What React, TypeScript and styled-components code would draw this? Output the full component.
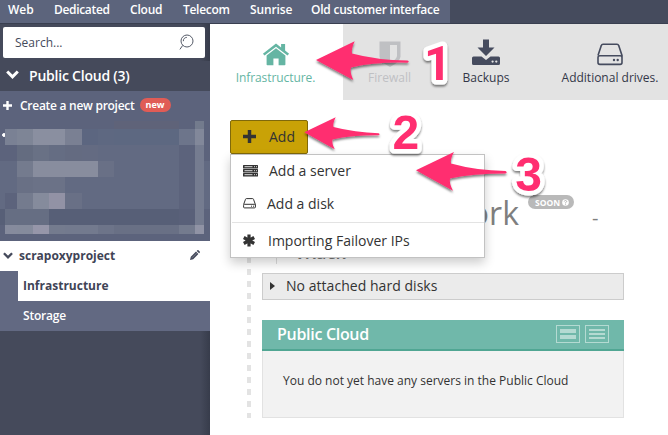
import React from "react";
import styled, { createGlobalStyle } from "styled-components";

const Global = createGlobalStyle`
  * { box-sizing: border-box; }
  body { margin: 0; background: #fff; overflow: hidden; }
  #root { font-family: "Open Sans", "Noto Sans", sans-serif; color: #333; }
  svg { display: block; flex: none; }
`;

const Page = styled.div`
  position: relative;
  width: 668px;
  height: 435px;
  overflow: hidden;
  display: flex;
  flex-direction: column;
  white-space: nowrap;
`;

const TopBar = styled.header`
  height: 24px;
  flex: none;
  background: #454b5d;
  border-bottom: 1px solid #393f50;
`;
const Nav = styled.nav`
  width: 450px;
  height: 23px;
  padding-left: 8px;
  display: flex;
  background: #5c647c;
`;
const NavItem = styled.a<{ $w: number; $ls?: number }>`
  width: ${(p) => p.$w}px;
  flex: none;
  font-size: 12px;
  font-weight: 600;
  line-height: 19px;
  letter-spacing: ${(p) => p.$ls ?? 0}px;
  color: #fff;
`;

const Body = styled.div`
  flex: 1;
  display: flex;
  min-height: 0;
`;
const Sidebar = styled.aside`
  width: 210px;
  flex: none;
  display: flex;
  flex-direction: column;
  color: #fff;
  background: linear-gradient(90deg, #454a5b 0 200px, #373c4b 210px);
`;
const Search = styled.div`
  margin: 3px 5px 3px 3px;
  height: 31px;
  flex: none;
  padding: 0 11px 0 12px;
  display: flex;
  align-items: center;
  justify-content: space-between;
  border-radius: 2px;
  background: #fff;
  color: #454a5b;
  font-size: 12px;
`;
const SideRow = styled.div<{ $bg: string; $color?: string; $pad: number; $size?: number; $weight?: number }>`
  height: 30px;
  flex: none;
  display: flex;
  align-items: center;
  padding: 0 10px 2px ${(p) => p.$pad}px;
  background: ${(p) => p.$bg};
  color: ${(p) => p.$color ?? "#fff"};
  font-size: ${(p) => p.$size ?? 12}px;
  font-weight: ${(p) => p.$weight ?? 600};
`;
const SideLabel = styled.span<{ $gap: number; $ls?: number }>`
  margin-left: ${(p) => p.$gap}px;
  letter-spacing: ${(p) => p.$ls ?? 0}px;
`;
const NewPill = styled.span`
  margin-left: 5px;
  width: 31px;
  height: 14px;
  border-radius: 7px;
  background: #e05c56;
  font-size: 9px;
  font-weight: 700;
  line-height: 13px;
  text-align: center;
`;
const EditIcon = styled.span`
  margin-left: auto;
`;
const SubItem = styled(SideRow)`
  border-left: 18px solid #626982;
`;

const Mosaic = styled.div`
  height: 120px;
  flex: none;
  display: grid;
  grid-template-columns: 5px 12px 16px 16px 16px 17px 16px 16px 65px 16px 9px 6px;
  grid-template-rows: 8px 16px 16px 16px 16px 16px 16px 9px 7px;
`;
const Cell = styled.i<{ $c: string }>`
  background: ${(p) => p.$c};
`;

const Main = styled.main`
  flex: 1;
  min-width: 0;
  display: flex;
  flex-direction: column;
  background: #fff;
`;
const Tabs = styled.div`
  height: 76px;
  flex: none;
  display: flex;
  background: #e3e3e3;
`;
const Tab = styled.div<{ $w: number; $bg?: string; $color: string; $ls?: number }>`
  width: ${(p) => p.$w}px;
  flex: none;
  display: flex;
  flex-direction: column;
  align-items: center;
  background: ${(p) => p.$bg ?? "transparent"};
  color: ${(p) => p.$color};
  font-size: 12px;
  line-height: 14px;
  letter-spacing: ${(p) => p.$ls ?? 0}px;
  svg { margin: 15px 0 2px; }
`;

const TabLabel = styled.span`
  padding-top: 1px;
`;

const Content = styled.section`
  position: relative;
  flex: 1;
  padding: 20px 0 0 20px;
`;
const AddButton = styled.button`
  width: 78px;
  height: 34px;
  padding: 0 0 1px 12px;
  display: flex;
  align-items: center;
  border: 1px solid #80690a;
  border-radius: 2px;
  background: #c9a206;
  color: #333;
  font: 14px "Open Sans", sans-serif;
`;
const AddLabel = styled.span`
  margin-left: 13px;
`;
const Menu = styled.div`
  position: absolute;
  left: 20px;
  top: 54px;
  width: 255px;
  height: 104px;
  background: #fff;
  border: 1px solid #c2c2c2;
  box-shadow: 0 5px 10px rgba(0, 0, 0, 0.2);
`;
const MenuItem = styled.div<{ $h: number; $gap: number; $ls?: number }>`
  height: ${(p) => p.$h}px;
  padding: 0 0 2px 12px;
  display: flex;
  align-items: center;
  font-size: 14px;
  color: #333;
  span { margin-left: ${(p) => p.$gap}px; letter-spacing: ${(p) => p.$ls ?? 0}px; }
`;
const Divider = styled.div`
  height: 1px;
  margin: 2px 0 2px 1px;
  background: #e3e3e3;
`;

const Diagram = styled.div`
  display: flex;
`;
const DashedLine = styled.div`
  width: 4px;
  height: 264px;
  margin-left: 17px;
  background: repeating-linear-gradient(#e3e3e3 0 6px, transparent 6px 12px);
  background-position-y: 7px;
`;
const Stack = styled.div`
  width: 362px;
  margin-left: 11px;
  display: flex;
  flex-direction: column;
`;
const TitleRow = styled.div`
  height: 88px;
  padding-top: 34px;
  display: flex;
  align-items: flex-start;
  color: #7f7f7f;
`;
const Title = styled.h1`
  width: 257px;
  margin: 2px 1px 0 0;
  font-size: 32px;
  font-weight: 400;
  line-height: 46px;
  text-align: right;
`;
const Soon = styled.span`
  margin: 7px 0 0 8px;
  width: 46px;
  height: 14px;
  padding-left: 7px;
  border-radius: 7px;
  display: flex;
  align-items: center;
  gap: 2px;
  background: #b9b9b9;
  color: #fff;
  font-size: 8.5px;
  font-weight: 700;
`;
const Dash = styled.span`
  margin: 18px 0 0 18px;
  font-size: 20px;
  line-height: 24px;
`;
const Rack = styled.div`
  height: 22px;
  margin: 0 0 9px 14px;
  padding-left: 18px;
  border-left: 1px solid #ddd;
  font-size: 18px;
  font-weight: 600;
  line-height: 20px;
  color: #777;
`;
const Disks = styled.div`
  height: 27px;
  padding: 0 0 2px 7px;
  display: flex;
  align-items: center;
  border: 1px solid #ccc;
  background: #ebebeb;
  font-size: 14px;
  span { margin-left: 11px; letter-spacing: 0.04px; }
`;
const Card = styled.div`
  margin-top: 20px;
  height: 98px;
  border: 1px solid #e2e2e2;
  border-top: 0;
  background: #f2f2f2;
`;
const CardHead = styled.div`
  height: 31px;
  margin: 0 -1px;
  padding: 0 15px 1px;
  display: flex;
  align-items: center;
  gap: 5px;
  background: #70b8aa;
  border-bottom: 2px solid #50a693;
  color: #fff;
  font-size: 16px;
  font-weight: 600;
`;
const CardTitle = styled.span`
  flex: 1;
  letter-spacing: -0.3px;
`;
const CardText = styled.p`
  margin: 20px 0 0 20px;
  font-size: 12px;
  line-height: 20px;
`;
const Annotations = styled.svg`
  position: absolute;
  inset: 0;
  font-weight: 700;
  font-size: 48px;
`;

const B = "#5c637c";
const M = "#626a82";
const D = "#575f77";
const tick = `radial-gradient(circle at 4px 6px, #fff 1.5px, ${B} 2.2px)`;
const mosaicRows: string[][] = [
  [B, B, B, B, B, B, B, B, "#5f6379", B, "#737b8d", B],
  [tick, "#7a8194", "#7e8596", "#8a8fa0", "#8a8fa0", "#7a8093", "#5c6680", "#5e6881", "#5d6881", "#6d758b", "#82889a", B],
  [B, B, "#646c80", "#697185", "#656d83", "#646b81", "#646b82", M, M, B, "#757c90", B],
  [M, M, "#747b8e", "#888d9e", "#888d9e", "#888d9e", "#888d9e", "#697086", M, B, "#757c90", M],
  [M, M, "#697085", "#6b7287", "#6b7287", M, M, M, M, B, "#757c90", M],
  [M, B, "#747b8e", "#858b9c", "#9292a5", "#697086", M, M, M, B, "#757c90", M],
  [D, "#666e83", "#666e83", "#666e83", D, D, D, D, D, "#596079", "#757c90", B],
  [B, "#868b9d", "#858b9c", "#9696a9", "#747b8e", "#737a8e", "#737a8e", "#6d7489", "#697085", "#747b8e", "#9093a5", B],
  [B, B, B, B, B, B, B, B, B, B, B, B],
];
const mosaicCells = mosaicRows.flat();

const Chevron = ({ w, color }: { w: number; color: string }) => (
  <svg width={w} height={w * 0.7} viewBox="0 0 13 9">
    <path d="M1.2 1.5 6.5 6.8 11.8 1.5" fill="none" stroke={color} strokeWidth="3" />
  </svg>
);
const Plus = ({ s, color }: { s: number; color: string }) => (
  <svg width={s} height={s} viewBox="0 0 12 12">
    <path d="M4.4 0h3.2v4.4H12v3.2H7.6V12H4.4V7.6H0V4.4h4.4z" fill={color} />
  </svg>
);
const Magnifier = () => (
  <svg width="16" height="17" viewBox="0 0 16 17" fill="none" stroke="#555b68">
    <circle cx="9" cy="7" r="6" strokeWidth="1" />
    <path d="M5.3 7.2c0-2.4 1.4-3.700 3.500-3.800M4.700 11.400 1.900 15.400" strokeWidth="1" />
  </svg>
);
const Pencil = () => (
  <svg width="10" height="10" viewBox="0 0 10 10" fill="#454a5b">
    <path d="M0 10 .8 6.8 6 1.6 8.4 4 3.2 9.2zM6.7.9 7.3.3q.6-.5 1.2 0l1.2 1.2q.5.6 0 1.2l-.6.6z" />
    <path d="M2 7.8 6.8 3" stroke="#aeb1bb" strokeWidth=".5" />
  </svg>
);
const House = () => (
  <svg width="28" height="29" viewBox="0 0 28 29" fill="#65b5a3">
    <path d="M14 4.5.9 14.8l1.6 1.8L14 7.8l11.5 8.8 1.6-1.8-4-3.2V5h-4v3.4z" />
    <path d="M14 9.3 4.6 16.5V25.4q0 .8.8.8h6v-6.7h5.2v6.7h6q.8 0 .8-.8v-8.9z" />
  </svg>
);
const Shield = () => (
  <svg width="28" height="29" viewBox="0 0 28 29">
    <path d="M3.500 2.500H24.500V17.500Q24 23 14 28 4 23 3.500 17.500z" fill="#bfc0c3" />
    <path d="M14 6H21V17Q20.500 20.500 14 24z" fill="#e3e3e3" />
  </svg>
);
const Download = () => (
  <svg width="28" height="29" viewBox="0 0 28 29" fill="#454b5e">
    <path d="M11 0.6h6v8h5.500L14 17 5.500 8.600H11z" />
    <path d="M1.500 17.500H9.500l4.500 3.500 4.500-3.500h8q1.500 0 1.500 1.500v5.500q0 1.500-1.500 1.500h-25Q0 26 0 24.500V19q0-1.500 1.500-1.500z" />
    <circle cx="20.600" cy="22.600" r="1.150" fill="#e3e3e3" />
    <circle cx="24.300" cy="22.600" r="1.150" fill="#e3e3e3" />
  </svg>
);
const Drive = () => (
  <svg width="28" height="29" viewBox="0 0 28 29" fill="none" stroke="#454b5e" strokeWidth="1.600">
    <path d="M2 16.500 5.300 6.600Q5.700 5.200 7 5.200H21Q22.300 5.200 22.700 6.600L26 16.500V23.500Q26 25.400 24.100 25.400H3.900Q2 25.400 2 23.500V18.500Q2 16.800 3.900 16.800H24.100Q26 16.800 26 18.500" />
    <circle cx="18" cy="21" r="1.200" fill="#454b5e" stroke="none" />
    <circle cx="21.700" cy="21" r="1.200" fill="#454b5e" stroke="none" />
  </svg>
);
const ServerGlyph = () => (
  <svg width="15" height="12" viewBox="0 0 15 12">
    {[0, 4, 8].map((y) => (
      <g key={y}>
        <rect x="0" y={y} width="15" height="3.500" rx=".5" fill="#333" />
        <path d={`M1.500 ${y + 1.700}H9.500M11 ${y + 1.700}h1M13 ${y + 1.700}h1`} stroke="#ddd" strokeWidth="1" />
      </g>
    ))}
  </svg>
);
const DiskGlyph = () => (
  <svg width="13" height="11" viewBox="0 0 13 11" fill="none" stroke="#333" strokeWidth="1">
    <path d="M.6 6.500 2.500 1.300Q2.700.6 3.400.6H9.600Q10.300.6 10.500 1.300L12.400 6.500V9Q12.400 9.900 11.500 9.900H1.500Q.6 9.900.6 9V7.300Q.6 6.300 1.500 6.300H11.500Q12.400 6.300 12.400 7.300" />
    <path d="M8 8.200h1M10 8.200h1" />
  </svg>
);
const Asterisk = () => (
  <svg width="12" height="13" viewBox="0 0 12 13" stroke="#333" strokeWidth="3.200">
    <path d="M6 .5v12M.8 3.500l10.400 6M.8 9.500l10.400-6" />
  </svg>
);
const ViewIcon = ({ lines }: { lines: boolean }) => (
  <svg width="24" height="18" viewBox="0 0 24 18">
    <rect x=".5" y=".5" width="23" height="17" fill="none" stroke="#b4dad2" />
    <path
      d={lines ? "M4 4h16v2H4zM4 8h16v2H4zM4 12h16v2H4z" : "M4 4h16v4H4zM4 10h16v4H4z"}
      fill="#b4dad2"
    />
  </svg>
);

const sans = '"Liberation Sans", Arial, sans-serif';
const digits = [
  { t: "1", x: 424, y: 80, font: 'Roboto, "Liberation Sans", sans-serif' },
  { t: "2", x: 392.5, y: 149, font: sans },
  { t: "3", x: 515.2, y: 190.5, font: sans },
];
const arrows = [
  "M316 60 354.700 41.300Q351 49 352 53.500 376 60 407.500 60.600 410 61.600 407.500 62.700 373 62 351 67.500 349.500 72 353.300 80z",
  "M304.300 132.300 335.700 117.300Q332.500 123.500 333.500 127 355 132.600 378.500 133.200 380.700 134.300 378.500 135.300 352 135 332.500 139.500 331.500 143 334.700 149.300z",
  "M416 170.300 454 152Q450 159 451 163.500 476 170.500 505.500 171 508 172.300 505.500 173.400 472 173.400 450 178.500 449 183.500 453 190.700z",
];

export default function App() {
  return (
    <Page>
      <Global />
      <TopBar>
        <Nav>
          <NavItem $w={46}>Web</NavItem>
          <NavItem $w={76} $ls={-0.33}>Dedicated</NavItem>
          <NavItem $w={53} $ls={-0.2}>Cloud</NavItem>
          <NavItem $w={67} $ls={-0.3}>Telecom</NavItem>
          <NavItem $w={61} $ls={-0.1}>Sunrise</NavItem>
          <NavItem $w={130} $ls={-0.23}>Old customer interface</NavItem>
        </Nav>
      </TopBar>
      <Body>
        <Sidebar>
          <Search>
            Search...
            <Magnifier />
          </Search>
          <SideRow $bg="#454a5b" $pad={6} $size={14}>
            <Chevron w={13} color="#fff" />
            <SideLabel $gap={10} $ls={-0.22}>Public Cloud (3)</SideLabel>
          </SideRow>
          <SideRow $bg={B} $pad={3}>
            <Plus s={9} color="#fff" />
            <SideLabel $gap={8} $ls={-0.27}>Create a new project</SideLabel>
            <NewPill>new</NewPill>
          </SideRow>
          <Mosaic>
            {mosaicCells.map((c, i) => (
              <Cell key={i} $c={c} />
            ))}
          </Mosaic>
          <SideRow $bg="#fff" $color="#3f4456" $pad={3} $weight={700}>
            <Chevron w={10} color="#454a5b" />
            <SideLabel $gap={6}>scrapoxyproject</SideLabel>
            <EditIcon>
              <Pencil />
            </EditIcon>
          </SideRow>
          <SubItem $bg="#fff" $color="#3f4456" $pad={5} $weight={700}>
            Infrastructure
          </SubItem>
          <SubItem $bg="#626982" $pad={5}>
            <SideLabel $gap={0} $ls={-0.2}>Storage</SideLabel>
          </SubItem>
        </Sidebar>
        <Main>
          <Tabs>
            <Tab $w={131} $bg="#fff" $color="#65b5a3" $ls={-0.07}>
              <House />
              <TabLabel>Infrastructure.</TabLabel>
            </Tab>
            <Tab $w={2} $bg="#fff" $color="#fff" />
            <Tab $w={93} $color="#bfc0c3">
              <Shield />
              <TabLabel>Firewall</TabLabel>
            </Tab>
            <Tab $w={100} $color="#333748">
              <Download />
              <TabLabel>Backups</TabLabel>
            </Tab>
            <Tab $w={148} $color="#333748">
              <Drive />
              <TabLabel>Additional drives.</TabLabel>
            </Tab>
          </Tabs>
          <Content>
            <AddButton>
              <Plus s={13} color="#333" />
              <AddLabel>Add</AddLabel>
            </AddButton>
            <Diagram>
              <DashedLine />
              <Stack>
                <TitleRow>
                  <Title>Network</Title>
                  <Soon>
                    SOON
                    <svg width="7" height="7" viewBox="0 0 7 7">
                      <circle cx="3.500" cy="3.500" r="3.300" fill="#fff" />
                      <path d="M2.300 2.500Q2.500 1.500 3.500 1.500T4.700 2.500Q4.700 3.100 3.500 3.700v.5M3.500 4.800v.9" fill="none" stroke="#aaa" strokeWidth=".9" />
                    </svg>
                  </Soon>
                  <Dash>-</Dash>
                </TitleRow>
                <Rack>vRack</Rack>
                <Disks>
                  <svg width="5" height="8" viewBox="0 0 5 8">
                    <path d="M0 0 5 4 0 8z" fill="#333" />
                  </svg>
                  <span>No attached hard disks</span>
                </Disks>
                <Card>
                  <CardHead>
                    <CardTitle>Public Cloud</CardTitle>
                    <ViewIcon lines={false} />
                    <ViewIcon lines />
                  </CardHead>
                  <CardText>You do not yet have any servers in the Public Cloud</CardText>
                </Card>
              </Stack>
            </Diagram>
            <Menu>
              <MenuItem $h={33} $gap={11}>
                <ServerGlyph />
                <span>Add a server</span>
              </MenuItem>
              <MenuItem $h={32} $gap={11}>
                <DiskGlyph />
                <span>Add a disk</span>
              </MenuItem>
              <Divider />
              <MenuItem $h={32} $gap={13}>
                <Asterisk />
                <span>Importing Failover IPs</span>
              </MenuItem>
            </Menu>
          </Content>
        </Main>
      </Body>
      <Annotations width="668" height="435" viewBox="0 0 668 435">
        <defs>
          <filter id="drop" x="-20%" y="-20%" width="140%" height="150%">
            <feDropShadow dx="0" dy="2" stdDeviation="1.300" floodOpacity=".5" />
          </filter>
        </defs>
        {arrows.map((d) => (
          <path key={d} d={d} fill="#ff2d70" filter="url(#drop)" />
        ))}
        {digits.map((g) => (
          <text
            key={g.t}
            x={g.x}
            y={g.y}
            fontFamily={g.font}
            fill="#ff2d70"
            stroke="#fff"
            strokeWidth="9"
            strokeLinejoin="round"
            paintOrder="stroke"
            filter="url(#drop)"
          >
            {g.t}
          </text>
        ))}
      </Annotations>
    </Page>
  );
}
